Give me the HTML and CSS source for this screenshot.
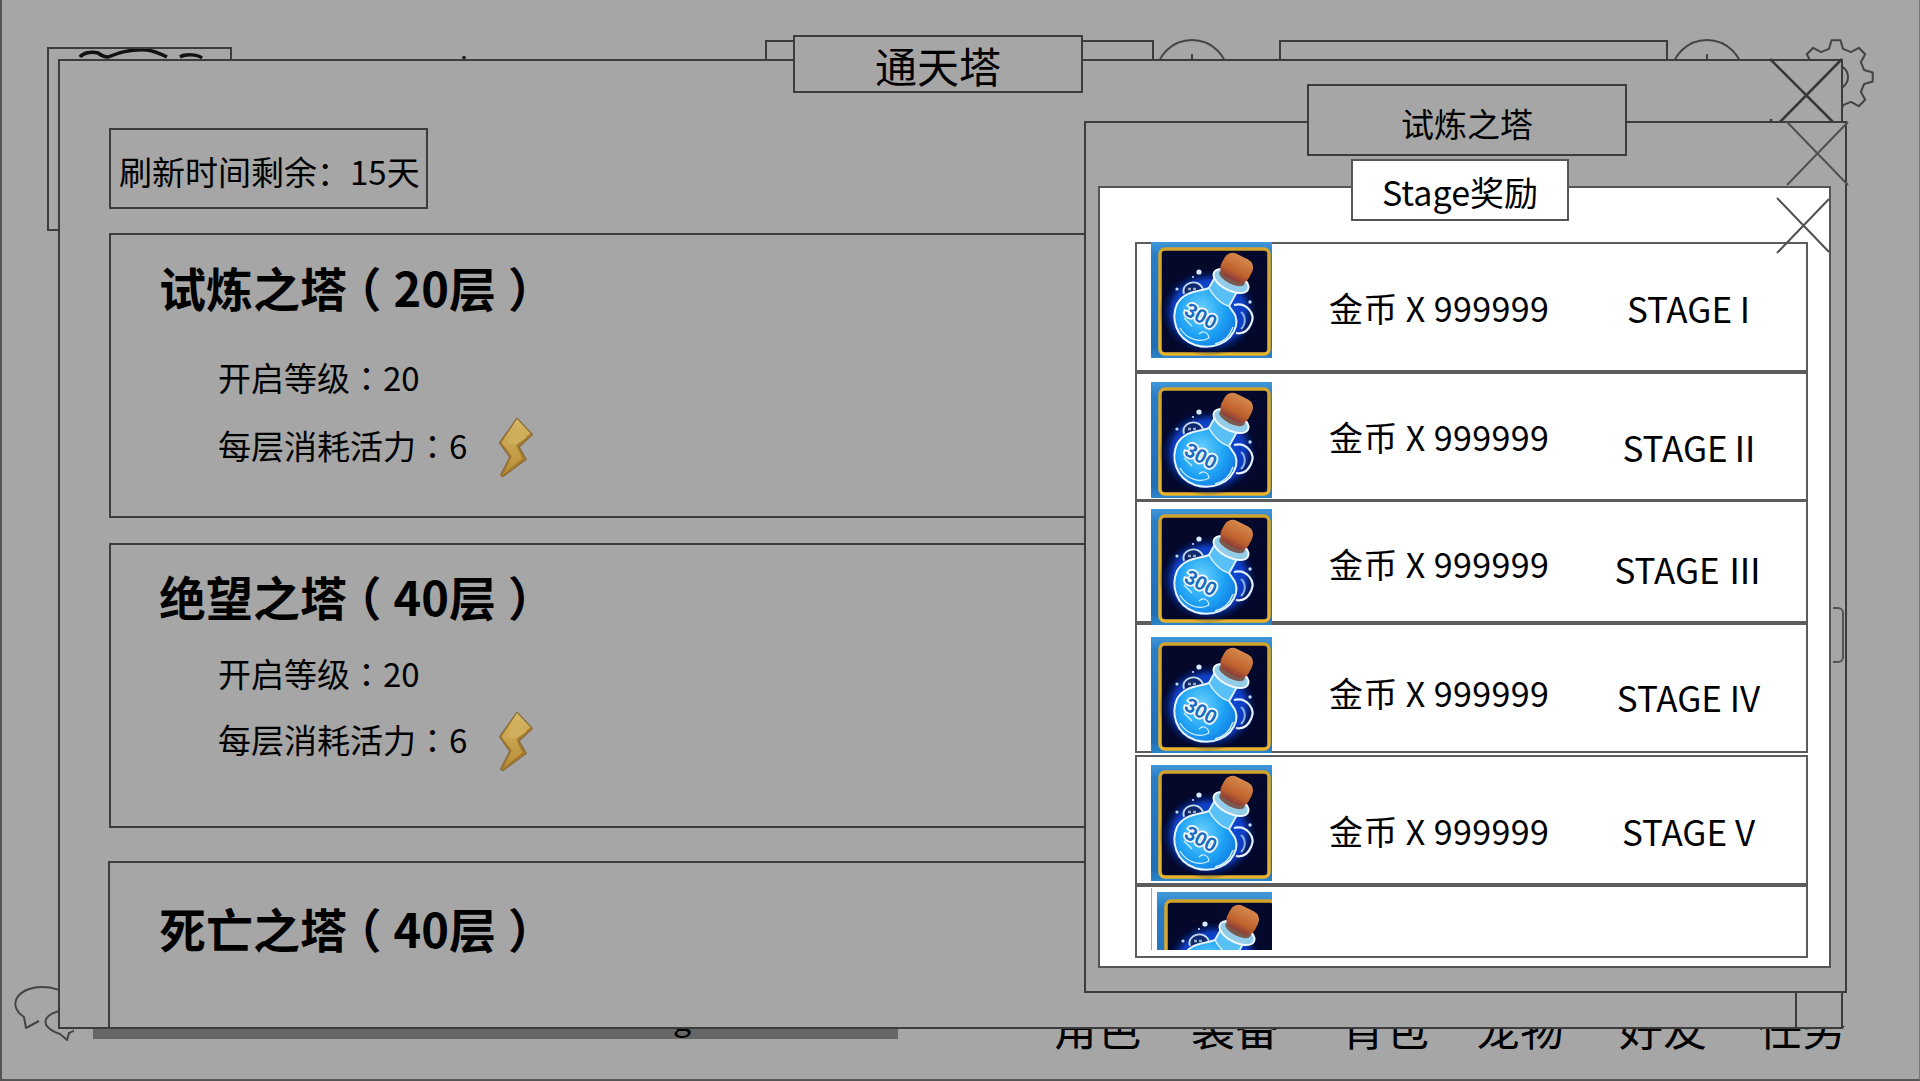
FILE: index.html
```html
<!DOCTYPE html>
<html lang="zh-CN">
<head>
<meta charset="utf-8">
<title>通天塔</title>
<link rel="stylesheet" href="styles.css">
</head>
<body>
<svg class="sprite" aria-hidden="true">
  <defs>
    <linearGradient id="tile" x1="0" y1="0" x2="0" y2="1">
      <stop offset="0" stop-color="#3f97d8"/><stop offset=".12" stop-color="#2a7cc4"/><stop offset=".9" stop-color="#1f6fb8"/><stop offset="1" stop-color="#2f86c8"/>
    </linearGradient>
    <linearGradient id="gold" x1="0" y1="0" x2="0" y2="1">
      <stop offset="0" stop-color="#d2a32c"/><stop offset="1" stop-color="#e6b32a"/>
    </linearGradient>
    <radialGradient id="glow">
      <stop offset="0" stop-color="#1468f0"/><stop offset=".72" stop-color="#0c3cc0"/><stop offset="1" stop-color="#04082a" stop-opacity="0"/>
    </radialGradient>
    <radialGradient id="liquid" cx=".42" cy=".5" r=".65">
      <stop offset="0" stop-color="#6ad2fc"/><stop offset=".55" stop-color="#1fa2f4"/><stop offset="1" stop-color="#0c6ede"/>
    </radialGradient>
    <linearGradient id="cork" x1="0" y1="0" x2="0" y2="1">
      <stop offset="0" stop-color="#d4884c"/><stop offset=".65" stop-color="#c0622c"/><stop offset="1" stop-color="#8a3c3a"/>
    </linearGradient>
    <linearGradient id="boltLight" x1="0" y1="0" x2="0" y2="1">
      <stop offset="0" stop-color="#d6b866"/><stop offset="1" stop-color="#b88e36"/>
    </linearGradient>
    <filter id="soft"><feGaussianBlur stdDeviation=".55"/></filter>
    <symbol id="potion" viewBox="0 0 121 116">
      <rect width="121" height="116" fill="url(#tile)"/>
      <rect x="9" y="7" width="109" height="105" rx="5" fill="#04082a" stroke="url(#gold)" stroke-width="3.5"/>
      <g filter="url(#soft)">
        <ellipse cx="58" cy="70" rx="50" ry="44" fill="url(#glow)"/>
        <path d="M83 63C96 60 105 72 100 82C96 91 90 92 85 91" fill="none" stroke="#e4f0ff" stroke-width="2.2"/>
        <path d="M90 70C95 74 95 82 90 87" fill="none" stroke="#8eb4dc" stroke-width="2"/>
        <path d="M33 52C29 41 47 35 52 47" fill="#0e2a70" stroke="#c8d8ec" stroke-width="1.8"/>
        <path d="M37 47H47" stroke="#9aaac0" stroke-width="2.4" stroke-dasharray="3 2"/>
        <path d="M58 46C48 50 34 48 26 62C20 76 24 96 44 103C60 108 80 102 85 84C87 74 82 70 78 64L88 46L66 32Z" fill="url(#liquid)" stroke="#e6f4ff" stroke-width="2"/>
        <path d="M66 32L88 46L78 64C70 62 62 54 58 46Z" fill="#58c0f4" stroke="#dcefff" stroke-width="1.6"/>
        <path d="M29 86C36 98 50 101 58 96M64 102C72 100 79 94 82 85M33 76L41 84M48 92C52 88 57 90 58 96" fill="none" stroke="#cfeeff" stroke-width="1.3"/>
        <ellipse cx="80" cy="39" rx="19" ry="9.5" transform="rotate(27 80 39)" fill="#94cdea" stroke="#eef8ff" stroke-width="2"/>
        <ellipse cx="81" cy="36" rx="14" ry="6" transform="rotate(27 81 36)" fill="#7a5a50"/>
        <rect x="70" y="13" width="31" height="25" rx="9" transform="rotate(27 85 26)" fill="url(#cork)"/>
        <circle cx="48" cy="30" r="2.6" fill="#d6ecff"/><circle cx="26" cy="47" r="1.6" fill="#c0dcff"/><circle cx="99" cy="60" r="1.7" fill="#c0dcff"/><circle cx="42" cy="35" r="1.1" fill="#c0dcff"/>
      </g>
      <text class="potion-label" x="50" y="81" transform="rotate(28 50 74)">300</text>
    </symbol>
    <symbol id="bolt" viewBox="0 0 34 58">
      <path d="M18 1L33 17L20 29L27 41L4 58L2 56L11 39L1 25Z" fill="#a67c2c" stroke="#86683a" stroke-width="1"/>
      <path d="M18 2L31 16L17 27L23 40L5 55L13 38L3 25Z" fill="url(#boltLight)"/>
      <path d="M18 10L27 20L17 27L8 25Z" fill="#d0b060" opacity=".8"/>
    </symbol>
  </defs>
</svg>

<div class="screen">
  <header class="topbar">
    <div class="logo-box">
      <svg class="logo-art" viewBox="0 0 185 40"><path d="M33 10C36 6 44 4 51 6C55 9 58 10 61 10C70 6 84 2 100 3C108 4 116 8 120 10M133 10C138 7 150 7 155 11"/></svg>
    </div>
    <i class="speck"></i>
    <div class="res-box res-first"></div>
    <svg class="plus-circle plus-first" viewBox="0 0 68 80"><circle cx="34" cy="37" r="36"/><path d="M34 15V57M13 37H55"/></svg>
    <div class="res-box res-second"></div>
    <svg class="plus-circle plus-second" viewBox="0 0 68 80"><circle cx="34" cy="37" r="36"/><path d="M34 15V57M13 37H55"/></svg>
    <svg class="gear" viewBox="-39 -39 78 78"><path d="M-7-28.1L-4.5-36.7L4.5-36.7L7-28.1L14.9-24.9L22.8-29.2L29.2-22.8L24.9-14.9L28.1-7L36.7-4.5L36.7 4.5L28.1 7L24.9 14.9L29.2 22.8L22.8 29.2L14.9 24.9L7 28.1L4.5 36.7L-4.5 36.7L-7 28.1L-14.9 24.9L-22.8 29.2L-29.2 22.8L-24.9 14.9L-28.1 7L-36.7 4.5L-36.7-4.5L-28.1-7L-24.9-14.9L-29.2-22.8L-22.8-29.2L-14.9-24.9Z"/><circle r="12"/></svg>
  </header>

  <footer class="bottombar">
    <svg class="chat" viewBox="0 0 62 58"><path d="M27 36L14 43L12 32C-6 20 6 2 30 2C40 2 52 5 56 12"/><path d="M48 49L55 55L57 48C75 42 66 26 51 26C36 26 22 40 48 49Z"/></svg>
    <div class="exp-bar"><span class="exp-text">g</span></div>
    <nav class="nav">
      <span class="nav-item">角色</span>
      <span class="nav-item nav-gear">装备</span>
      <span class="nav-item nav-bag">背包</span>
      <span class="nav-item nav-pet">宠物</span>
      <span class="nav-item nav-friend">好友</span>
      <span class="nav-item nav-task">任务</span>
    </nav>
  </footer>

  <section class="window tower">
    <h1 class="tower-title">通天塔</h1>
    <svg class="cross tower-cross" viewBox="1769 61 72 63"><path d="M1770 59L1833 122M1842 59L1780 122M1771 119V121"/></svg>
    <div class="refresh">刷新时间剩余<span class="pc">：</span>15天</div>
    <article class="card card-first">
      <h2 class="card-title">试炼之塔<span class="paren-open">（</span>20层<span class="paren-close">）</span></h2>
      <p class="info">开启等级<span class="pc">：</span>20</p>
      <p class="info info-cost">每层消耗活力<span class="pc">：</span>6<svg class="bolt"><use href="#bolt"/></svg></p>
    </article>
    <article class="card card-second">
      <h2 class="card-title">绝望之塔<span class="paren-open">（</span>40层<span class="paren-close">）</span></h2>
      <p class="info">开启等级<span class="pc">：</span>20</p>
      <p class="info info-cost">每层消耗活力<span class="pc">：</span>6<svg class="bolt"><use href="#bolt"/></svg></p>
    </article>
    <article class="card card-third">
      <h2 class="card-title">死亡之塔<span class="paren-open">（</span>40层<span class="paren-close">）</span></h2>
    </article>
  </section>

  <section class="window trial">
    <h2 class="trial-title">试炼之塔</h2>
    <svg class="cross trial-cross" viewBox="1784 124 61 62"><path d="M1785 122L1846 185M1846 122L1785 185"/></svg>
    <div class="handle"></div>
    <div class="stage-panel">
      <h3 class="stage-title">Stage奖励</h3>
      <svg class="cross stage-cross" viewBox="1777 198 52 55"><path d="M1777 198L1829 252M1829 199L1777 253"/></svg>
      <ul class="rows">
        <li class="row row-1"><svg class="icon"><use href="#potion"/></svg><span class="gold">金币 X 999999</span><span class="stage">STAGE I</span></li>
        <li class="row row-2"><svg class="icon"><use href="#potion"/></svg><span class="gold">金币 X 999999</span><span class="stage">STAGE Ⅱ</span></li>
        <li class="row row-3"><svg class="icon"><use href="#potion"/></svg><span class="gold">金币 X 999999</span><span class="stage">STAGE Ⅲ</span></li>
        <li class="row row-4"><svg class="icon"><use href="#potion"/></svg><span class="gold">金币 X 999999</span><span class="stage">STAGE IV</span></li>
        <li class="row row-5"><svg class="icon"><use href="#potion"/></svg><span class="gold">金币 X 999999</span><span class="stage">STAGE V</span></li>
        <li class="row row-6"><div class="icon-cut"><svg class="icon-inner"><use href="#potion"/></svg></div></li>
      </ul>
    </div>
  </section>
</div>
</body>
</html>
```
FILE: styles.css
```css
* { box-sizing: border-box; margin: 0; padding: 0; }
html, body { width: 1920px; height: 1081px; overflow: hidden; }
body {
  background: #a6a6a6;
  color: #000;
  font-family: "Noto Sans CJK SC", "Noto Sans", sans-serif;
  font-size: 33px;
  font-weight: 400;
}
.sprite { position: absolute; width: 0; height: 0; }
.pc { font-family: "Noto Sans CJK TC", sans-serif; }
.paren-open { font-feature-settings: "halt"; margin: 0 12px 0 11px; }
.paren-close { font-feature-settings: "halt"; margin-left: 12px; }

.screen {
  position: relative;
  width: 1920px;
  height: 1081px;
  display: flex;
  flex-direction: column;
  justify-content: space-between;
  overflow: hidden;
  background: #a6a6a6;
  border-left: 2px solid #555;
  border-right: 1px solid #777;
  border-bottom: 2px solid #555;
}

/* background layer */
.topbar { display: flex; align-items: flex-start; padding-top: 40px; height: 231px; }
.logo-box {
  width: 185px; height: 184px; margin: 7px 0 0 45px;
  border: 2px solid #3c3c3c; overflow: hidden;
}
.logo-art { display: block; width: 185px; height: 40px; margin: -2px 0 0 -2px; }
.logo-art path { fill: none; stroke: #111; stroke-width: 3.5; }
.speck { width: 4px; height: 3px; margin: 16px 0 0 230px; background: #222; border-radius: 2px; }
.res-box { width: 389px; height: 40px; border: 2px solid #3c3c3c; }
.res-first { margin-left: 299px; }
.res-second { margin-left: 53px; }
.plus-circle { width: 68px; height: 80px; margin-top: -1px; flex: none; }
.plus-circle circle, .plus-circle path { fill: none; stroke: #444; stroke-width: 2; }
.plus-first { margin-left: 4px; }
.plus-second { margin-left: 5px; }
.gear { width: 78px; height: 78px; margin: -2px 0 0 56px; flex: none; }
.gear path, .gear circle { fill: none; stroke: #444; stroke-width: 2; stroke-linejoin: round; }

.bottombar { display: flex; align-items: flex-start; height: 94px; }
.chat { width: 62px; height: 58px; margin-left: 10px; flex: none; }
.chat path { fill: none; stroke: #444; stroke-width: 2; stroke-linejoin: round; }
.exp-bar { width: 805px; height: 19px; margin: 35px 0 0 19px; background: #666; position: relative; flex: none; }
.exp-text { position: absolute; left: 580px; top: -25px; font-size: 32px; line-height: 44px; }
.nav { display: flex; margin: 20px 0 0 155px; }
.nav-item { font-size: 44px; line-height: 44px; white-space: nowrap; }
.nav-gear { margin-left: 50px; }
.nav-bag { margin-left: 62px; }
.nav-pet { margin-left: 47px; }
.nav-friend { margin-left: 55px; }
.nav-task { margin-left: 51px; }

/* windows */
.window { position: absolute; background: #a6a6a6; border: 2px solid #3c3c3c; }
.cross { position: absolute; overflow: visible; }
.cross path { fill: none; stroke: #383838; stroke-width: 2.5; }

.tower {
  left: 56px; top: 59px; width: 1785px; height: 970px;
  padding: 67px 0 0 49px;
  display: flex; flex-direction: column; align-items: flex-start;
}
.tower-title {
  position: absolute; left: 733px; top: -26px; width: 290px; height: 58px;
  background: #a6a6a6; border: 2px solid #3c3c3c;
  font-size: 42px; font-weight: 400; line-height: 55px; text-align: center;
}
.tower-cross { right: 0; top: 0; width: 72px; height: 63px; }
.refresh {
  width: 319px; height: 81px; margin-bottom: 24px; padding-left: 8px;
  border: 2px solid #3c3c3c; line-height: 82px; white-space: nowrap;
}
.card { width: 1689px; height: 285px; border: 2px solid #3c3c3c; padding-left: 48px; }
.card-first { margin-bottom: 25px; padding-top: 22px; }
.card-second { margin-bottom: 33px; padding-top: 21px; }
.card-third { margin-left: -1px; flex: 1; padding: 35px 0 0 49px; border-bottom: 0; }
.card-title { font-size: 47px; font-weight: 700; line-height: 60px; white-space: nowrap; }
.info {
  display: flex; align-items: center; height: 44px; line-height: 44px;
  margin: 38px 0 0 59px; white-space: nowrap;
}
.card-second .info { margin-top: 25px; }
.card .info-cost { margin-top: 24px; }
.card-second .info-cost { margin-top: 22px; }
.bolt { width: 36px; height: 60px; margin: 4px 0 0 31px; flex: none; }

.trial { left: 1082px; top: 121px; width: 763px; height: 872px; padding: 63px 14px 0 12px; z-index: 2; }
.trial-title {
  position: absolute; left: 221px; top: -39px; width: 320px; height: 72px;
  background: #a6a6a6; border: 2px solid #3c3c3c;
  font-size: 33px; font-weight: 400; line-height: 74px; text-align: center;
}
.trial-cross { left: 700px; top: 1px; width: 61px; height: 62px; }
.trial-cross path { stroke: #505050; stroke-width: 2; }
.handle {
  position: absolute; left: 747px; top: 484px; width: 11px; height: 56px;
  border: 2px solid #555; border-left: 0; border-radius: 0 6px 6px 0;
}
.stage-panel {
  position: relative; width: 733px; height: 782px;
  background: #fff; border: 2px solid #555; padding: 54px 0 0 35px;
}
.stage-title {
  position: absolute; left: 251px; top: -29px; width: 218px; height: 62px;
  background: #fff; border: 2px solid #555;
  font-size: 34px; font-weight: 400; line-height: 62px; text-align: center;
}
.stage-cross { right: 0; top: 10px; width: 52px; height: 55px; z-index: 3; }
.stage-cross path { stroke: #505050; stroke-width: 2; }

.rows { list-style: none; width: 673px; display: flex; flex-direction: column; }
.row {
  display: flex; align-items: flex-start; padding-left: 14px;
  border: 2px solid #5c5c5c; line-height: 44px; white-space: nowrap;
}
.icon { position: relative; z-index: 1; width: 121px; height: 116px; flex: none; margin-top: var(--icon-top); }
.gold { width: 242px; margin: var(--gold-top) 0 0 57px; flex: none; font-size: 34px; letter-spacing: .4px; }
.stage { width: 235px; margin-top: var(--stage-top); text-align: center; flex: none; font-size: 35px; }
.row-1 { height: 130px; --icon-top: -2px; --gold-top: 42px; --stage-top: 42px; }
.row-2 { height: 129px; --icon-top: 8px; --gold-top: 41px; --stage-top: 51px; }
.row-2 .stage { word-spacing: -8px; padding-left: 8px; }
.row-3 { height: 123px; margin-top: -1px; --icon-top: 7px; --gold-top: 40px; --stage-top: 45px; }
.row-4 { height: 130px; --icon-top: 12px; --gold-top: 46px; --stage-top: 50px; }
.row-5 { height: 130px; margin-top: 2px; --icon-top: 8px; --gold-top: 52px; --stage-top: 52px; }
.row-6 { height: 73px; }
.icon-cut {
  width: 121px; height: 62px; margin-top: 1px; overflow: hidden;
  padding: 6px 0 0 6px;
  background: linear-gradient(90deg, #d6a520 1px, #fff 1px, #fff 6px, transparent 6px), linear-gradient(#fff 4px, #3f97d8 4px);
}
.icon-inner { display: block; width: 121px; height: 116px; }

.potion-label {
  font-family: "Liberation Sans", sans-serif; font-size: 20px; font-weight: 700;
  fill: #1a6cc0; stroke: #f6faff; stroke-width: 3.4px; paint-order: stroke; text-anchor: middle;
}
```
